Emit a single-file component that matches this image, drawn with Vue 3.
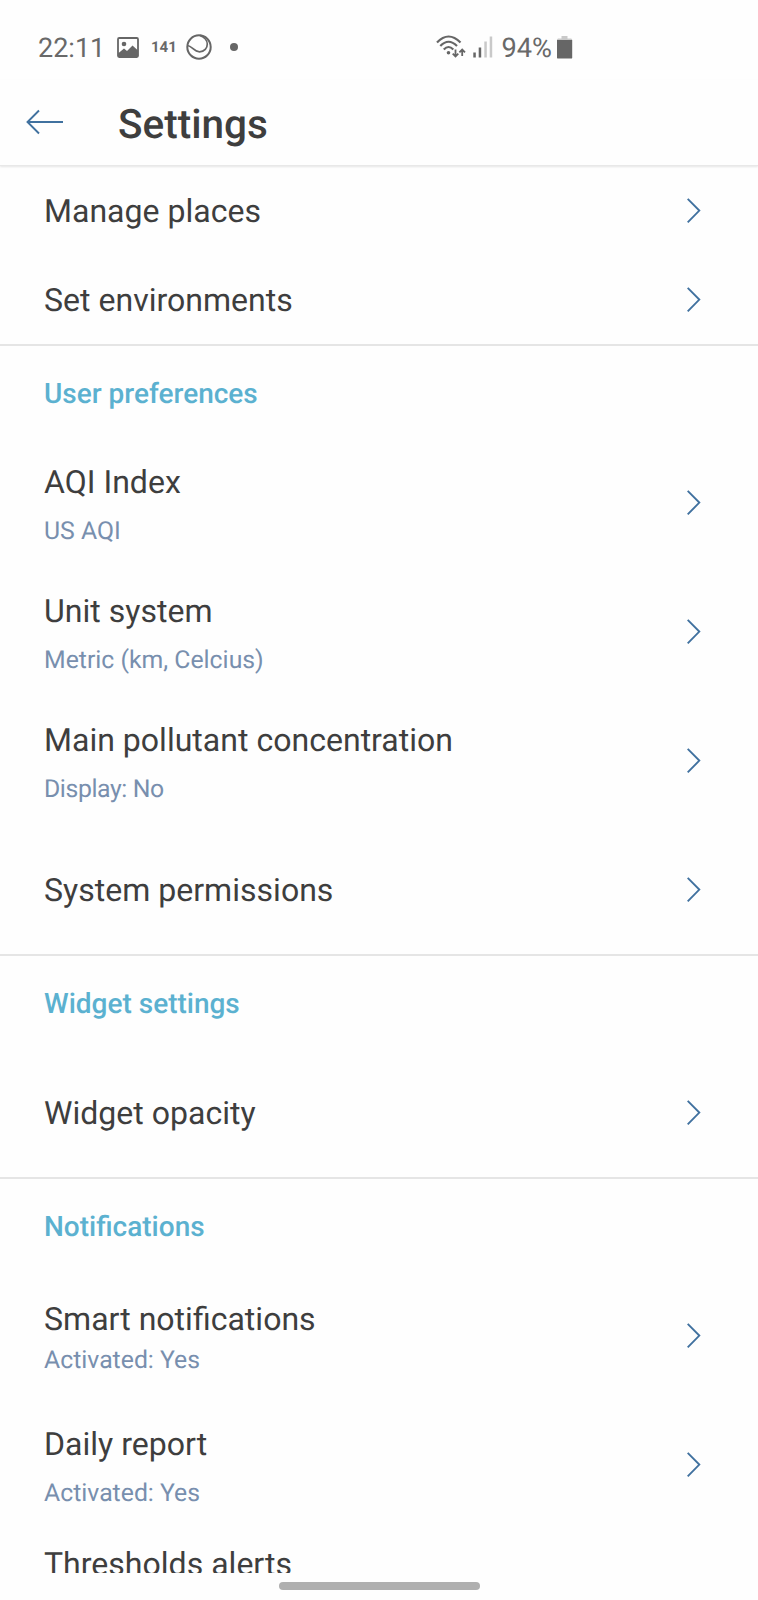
<script setup>
const sections = [
  {
    title: '',
    rows: [
      { label: 'Manage places', kind: 'short' },
      { label: 'Set environments', kind: 'short' },
    ],
  },
  {
    title: 'User preferences',
    rows: [
      { label: 'AQI Index', note: 'US AQI' },
      { label: 'Unit system', note: 'Metric (km, Celcius)' },
      { label: 'Main pollutant concentration', note: 'Display: No', kind: 'narrow' },
      { label: 'System permissions' },
    ],
  },
  {
    title: 'Widget settings',
    rows: [{ label: 'Widget opacity' }],
  },
  {
    title: 'Notifications',
    rows: [
      { label: 'Smart notifications', note: 'Activated: Yes', kind: 'tight' },
      { label: 'Daily report', note: 'Activated: Yes' },
      { label: 'Thresholds alerts', kind: 'last' },
    ],
  },
]
</script>

<template>
  <div class="screen">
    <div class="status">
      <span class="clock">22:11</span>
      <svg class="photo" width="22" height="21" viewBox="0 0 22 21">
        <rect x="1" y="1" width="20" height="19" rx="1.2" fill="none" stroke="#666" stroke-width="1.8" />
        <circle cx="7" cy="7" r="2.3" fill="#666" />
        <path d="M1 16.5 L7 11.5 L10 14 L15.5 8.5 L21 13.5 V20 H1 Z" fill="#666" />
      </svg>
      <span class="count">141</span>
      <svg class="orb" width="26" height="26" viewBox="0 0 26 26" fill="none" stroke="#666">
        <circle cx="13" cy="13" r="11.7" stroke-width="2" />
        <path d="M1.500 11.500 C6 12 8 17.800 13.500 17.800 C18.500 17.800 21.300 14 21.300 10 C21.300 6.500 18 3 14 1.400" stroke-width="1.700" />
      </svg>
      <span class="dot"></span>
      <svg class="wifi" width="30" height="24" viewBox="0 0 30 24" fill="none" stroke="#666" stroke-width="2.200">
        <path d="M1 7.500 Q12.500 -4.500 24.500 7.500" />
        <path d="M4.300 11 Q12.500 2.500 21 11" />
        <path d="M7.800 14.500 Q12.500 9.500 17.300 14.500" />
        <circle cx="12.500" cy="17.800" r="1.800" fill="#666" stroke="none" />
        <path d="M19.500 14.500 V21.500 M16.700 18.700 L19.500 21.500 L22.300 18.700 M26.200 21 V14.500 M23.400 17.300 L26.200 14.500 L29 17.300" stroke-width="1.800" />
      </svg>
      <svg class="signal" width="20" height="22" viewBox="0 0 20 22">
        <rect x="0.300" y="16.500" width="2.500" height="5" fill="#666" />
        <rect x="5.700" y="11.500" width="2.500" height="10" fill="#666" />
        <rect x="11.300" y="5.500" width="2.500" height="16" fill="#c9c9c9" />
        <rect x="16.700" y="0.500" width="2.500" height="21" fill="#c9c9c9" />
      </svg>
      <span class="percent">94%</span>
      <svg class="battery" width="16" height="23" viewBox="0 0 16 23">
        <path d="M4.500 0 H10.500 V2.500 H14 Q15.200 2.500 15.200 4 H0 Q0 2.500 1.200 2.500 H4.500 Z" fill="#c9c9c9" />
        <path d="M0 4 H15.200 V21.400 Q15.200 22.600 14 22.600 H1.200 Q0 22.600 0 21.400 Z" fill="#666" />
      </svg>
    </div>

    <header class="bar">
      <svg class="back" width="38" height="26" viewBox="0 0 38 26" fill="none" stroke="#40719f" stroke-width="1.900">
        <path d="M13 1.500 L1.500 13 L13 24.500 M1.500 13 H37" />
      </svg>
      <h1>Settings</h1>
    </header>

    <main class="list">
      <section v-for="(s, i) in sections" :key="i">
        <h2 v-if="s.title">{{ s.title }}</h2>
        <div v-for="r in s.rows" :key="r.label" class="row" :class="r.kind">
          <div class="text">
            <div class="label">{{ r.label }}</div>
            <div v-if="r.note" class="note">{{ r.note }}</div>
          </div>
          <svg v-if="r.kind !== 'last'" class="chevron" width="14" height="26" viewBox="0 0 14 26" fill="none" stroke="#40719f" stroke-width="1.900">
            <path d="M0.700 0.800 L12.300 12.600 L0.700 24.400" />
          </svg>
        </div>
      </section>
    </main>

    <footer class="nav"><span class="pill"></span></footer>
  </div>
</template>

<style>
body {
  margin: 0;
  background: #fefefe;
}
</style>

<style scoped>
.screen {
  width: 758px;
  height: 1600px;
  display: flex;
  flex-direction: column;
  overflow: hidden;
  background: #fefefe;
  color: #3e3e3e;
  font-family: Roboto, "Liberation Sans", sans-serif;
  text-rendering: geometricPrecision;
}
.status {
  height: 80px;
  flex: none;
  box-sizing: border-box;
  padding: 14px 0 0 38px;
  display: flex;
  align-items: center;
  color: #696969;
}
.clock {
  width: 68px;
  margin: 2px 11px 0 0;
  font-size: 27px;
  white-space: nowrap;
}
.count {
  width: 25px;
  margin: 0 11px 0 12px;
  font-size: 15px;
  font-weight: 700;
}
.orb {
  margin-left: -1px;
}
.dot {
  width: 8px;
  height: 8px;
  margin-left: 17.5px;
  border-radius: 50%;
  background: #666;
}
.wifi {
  margin-left: 198px;
}
.signal {
  margin-left: 7px;
}
.percent {
  width: 51px;
  margin: 2px 0 0 9px;
  font-size: 27.2px;
  white-space: nowrap;
}
.battery {
  margin-left: 4px;
}
.bar {
  height: 86px;
  flex: none;
  box-sizing: border-box;
  display: flex;
  align-items: center;
  padding: 0 0 1px 26px;
  border-bottom: 1px solid #e8e8e8;
  box-shadow: 0 1px 2px rgba(0, 0, 0, 0.1);
}
h1 {
  margin: 3px 0 0 54px;
  font-size: 40.5px;
  line-height: 48px;
  font-weight: 500;
}
.list {
  height: 1407px;
  flex: none;
  overflow: hidden;
}
section {
  border-bottom: 2px solid #e5e5e5;
}
h2 {
  height: 92px;
  box-sizing: border-box;
  margin: 0;
  padding: 31px 44px 0;
  font-size: 28px;
  line-height: 34px;
  font-weight: 500;
  color: #5bb1d0;
}
.row {
  height: 129px;
  display: flex;
  align-items: center;
  justify-content: space-between;
  padding: 0 57px 0 44px;
}
.text {
  padding-top: 1px;
}
.short {
  height: 89px;
}
.last {
  align-items: flex-start;
}
.last .text {
  padding-top: 16px;
}
.label {
  font-size: 32.05px;
  line-height: 38px;
  white-space: nowrap;
}
.note {
  margin: 17px 0 -3px;
  font-size: 24.8px;
  line-height: 28px;
  color: #788fae;
}
.narrow .note {
  letter-spacing: -0.4px;
}
.tight .note {
  margin: 9px 0 -3px;
}
.nav {
  flex: 1;
  display: flex;
  justify-content: center;
  align-items: flex-start;
  padding-top: 9px;
}
.pill {
  width: 201px;
  height: 8px;
  border-radius: 4px;
  background: #afafaf;
}
</style>
